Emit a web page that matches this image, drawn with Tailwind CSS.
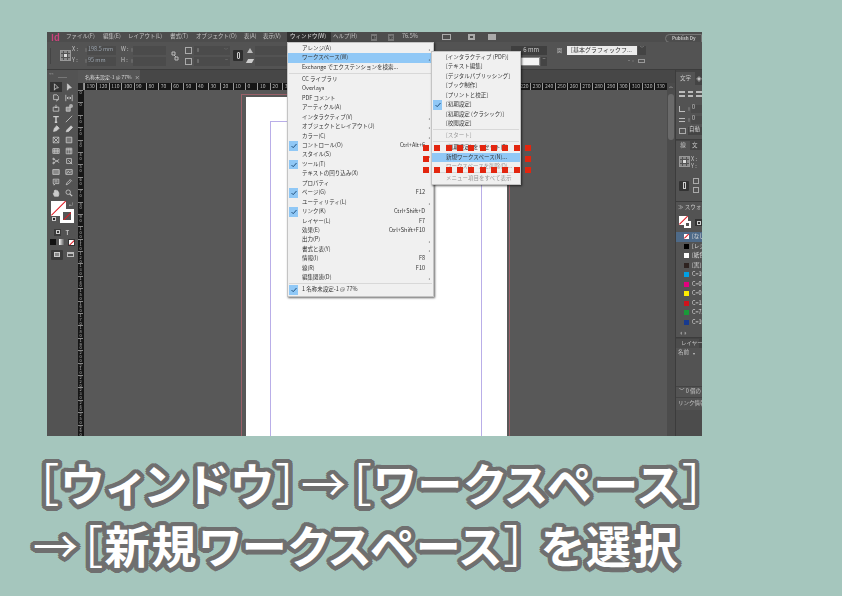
<!DOCTYPE html>
<html lang="ja">
<head>
  <meta charset="UTF-8">
  <title>新規ワークスペース</title>
  <script src="https://cdn.jsdelivr.net/npm/@tailwindcss/browser@4"></script>
</head>
<body class="bg-[#a5c6bd] w-[842px] h-[596px] overflow-hidden font-['Noto_Sans_CJK_JP',sans-serif]">
  <div class="pt-[32px] pl-[47px]">
    <!-- app window -->
    <div class="relative w-[655px] h-[404px] bg-[#535353] flex flex-col overflow-hidden text-[5.5px] text-[#c4c4c4] [filter:blur(0.35px)]">

      <!-- menu bar -->
      <div class="h-[10px] bg-[#4d4d4d] flex items-center pl-[4px] shrink-0 leading-none whitespace-nowrap">
        <span class="w-[15px] text-[9px] font-bold text-[#c9437c]">Id</span>
        <span class="w-[37px]">ファイル(F)</span>
        <span class="w-[25px]">編集(E)</span>
        <span class="w-[42px]">レイアウト(L)</span>
        <span class="w-[26px]">書式(T)</span>
        <span class="w-[48px]">オブジェクト(O)</span>
        <span class="w-[19px]">表(A)</span>
        <span class="w-[24px]">表示(V)</span>
        <span class="w-[44px] h-[10px] bg-[#303030] pl-[3px] flex items-center text-[#e0e0e0]">ウィンドウ(W)</span>
        <span class="w-[40px] pl-[2px]">ヘルプ(H)</span>
        <span class="w-[6px] h-[7px] bg-[#777] text-[#333] text-[4px] flex items-center justify-center font-bold">Br</span>
        <span class="w-[6px] h-[7px] bg-[#777] text-[#333] text-[4px] flex items-center justify-center font-bold ml-[11px]">St</span>
        <span class="ml-[8px] w-[35px]">76.5%</span>
        <span class="w-[9px] h-[6px] border border-[#aaa] ml-[5px]"></span>
        <span class="w-[7px] h-[6px] border-2 border-[#aaa] ml-[17px]"></span>
        <span class="w-[8px] h-[6px] bg-[#aaa] ml-[13px]"></span>
        <span class="ml-auto mr-0 mt-[2px] w-[37px] h-[9px] border border-[#777] rounded-l-[5px] text-[4.5px] font-bold flex items-center pl-[6px]">Publish Dy</span>
      </div>

      <!-- control panel -->
      <div class="h-[28px] bg-[#535353] border-b border-[#3c3c3c] flex items-center shrink-0 leading-none whitespace-nowrap">
        <div class="w-[1px] h-[16px] bg-[#444] ml-[3px]"></div>
        <div class="ml-[9px] w-[11px] h-[11px] grid grid-cols-3 gap-[1px] border border-[#999]">
          <i class="bg-[#888]"></i><i class="bg-[#888]"></i><i class="bg-[#888]"></i><i class="bg-[#888]"></i><i class="bg-[#ddd]"></i><i class="bg-[#888]"></i><i class="bg-[#888]"></i><i class="bg-[#888]"></i><i class="bg-[#888]"></i>
        </div>
        <div class="ml-[1px] flex flex-col gap-[2px] w-[44px]">
          <div class="h-[9px] flex items-center"><span class="w-[12px]">X :</span><span class="w-[3px] text-[4px] text-[#888]">◊</span><span class="h-[9px] flex-1 bg-[#4b4b4b] pl-[1px] flex items-center text-[#9aa3ad]">198.5 mm</span></div>
          <div class="h-[9px] flex items-center"><span class="w-[12px]">Y :</span><span class="w-[3px] text-[4px] text-[#888]">◊</span><span class="h-[9px] flex-1 bg-[#4b4b4b] pl-[1px] flex items-center text-[#9aa3ad]">95 mm</span></div>
        </div>
        <div class="ml-[5px] flex flex-col gap-[2px] w-[45px]">
          <div class="h-[9px] flex items-center"><span class="w-[9px]">W :</span><span class="w-[3px] text-[4px] text-[#888]">◊</span><span class="h-[9px] flex-1 bg-[#4b4b4b]"></span></div>
          <div class="h-[9px] flex items-center"><span class="w-[9px]">H :</span><span class="w-[3px] text-[4px] text-[#888]">◊</span><span class="h-[9px] flex-1 bg-[#4b4b4b]"></span></div>
        </div>
        <svg class="ml-[5px] w-[8px] h-[10px]" viewBox="0 0 8 10" fill="none" stroke="#bbb"><path d="M1 1h3v3H1zM3 4l2 2M4 6h3v3H4z"/></svg>
        <div class="ml-[6px] flex flex-col gap-[2px] w-[45px]">
          <div class="h-[9px] flex items-center gap-[2px]"><span class="w-[7px] h-[7px] border border-[#aaa]"></span><span class="h-[9px] flex-1 bg-[#4b4b4b] flex items-center justify-between px-[2px] text-[#888]"><b class="text-[4px]">◊</b><b class="font-normal text-[4px]">﹀</b></span></div>
          <div class="h-[9px] flex items-center gap-[2px]"><span class="w-[7px] h-[7px] border border-[#aaa]"></span><span class="h-[9px] flex-1 bg-[#4b4b4b] flex items-center justify-between px-[2px] text-[#888]"><b class="text-[4px]">◊</b><b class="font-normal">−</b></span></div>
        </div>
        <div class="ml-[3px] w-[10px] h-[11px] bg-[#2e2e2e] rounded-[1px] flex items-center justify-center">
          <span class="w-[3px] h-[7px] border border-[#ccc] rounded-[1px]"></span>
        </div>
        <div class="ml-[4px] flex flex-col gap-[2px] w-[42px]">
          <div class="h-[9px] flex items-center gap-[2px]"><span class="w-0 h-0 border-x-[3px] border-x-transparent border-b-[5px] border-b-[#bbb]"></span><span class="h-[9px] flex-1 bg-[#4b4b4b]"></span></div>
          <div class="h-[9px] flex items-center gap-[2px]"><span class="w-[6px] h-[4px] bg-[#ccc] skew-x-[-30deg]"></span><span class="h-[9px] flex-1 bg-[#4b4b4b]"></span></div>
        </div>
        <div class="flex-1"></div>
        <!-- right of the open menus -->
        <div class="flex flex-col gap-[2px] w-[36px]">
          <div class="h-[9px] bg-[#3f3f3f] text-[#ccc] flex items-center justify-end pr-[8px] text-[6px]">6 mm</div>
          <div class="h-[9px] flex items-center gap-[1px]"><span class="w-[28px] h-[9px] bg-[#f4f4f4] border border-[#888] ml-[1px]"></span><span class="flex-1 h-[9px] bg-[#444] text-center">−</span></div>
        </div>
        <div class="ml-[10px] w-[10px] h-[19px] text-[5px] leading-[8px]">圖</div>
        <div class="flex flex-col gap-[2px] w-[79px]">
          <div class="h-[9px] flex items-center gap-[1px]"><span class="w-[70px] h-[9px] bg-[#ececec] text-[#333] text-[6px] pl-[4px] flex items-center">[基本グラフィックフ...</span><span class="flex-1 h-[9px] bg-[#444] text-center text-[4px]">﹀</span></div>
          <div class="h-[9px] flex items-center justify-end pr-[1px] gap-[3px] text-[4px] text-[#999]"><span>▪◦</span><span class="w-[7px] h-[4px] border border-[#999]"></span></div>
        </div>
        <div class="w-[56px]"></div>
      </div>

      <div class="flex-1 flex min-h-0">
        <!-- toolbox -->
        <div id="toolbox" class="w-[31px] shrink-0 bg-[#535353] flex flex-col items-center">
          <div class="w-full text-[4px] leading-[6px] pl-[2px] text-[#aaa]">&lt;&lt;</div>
          <div class="w-[9px] h-[1px] bg-[#777] mt-[1px] mb-[4px]"></div>
          <div id="tools" class="flex flex-col gap-[0.6px]"></div>
          <!-- fill and stroke -->
          <div class="relative w-[26px] h-[24px] mt-[3px] ml-[2px]">
            <div class="w-[15px] h-[15px] bg-white overflow-hidden"><div class="w-[22px] h-[1px] bg-[#e01b24] origin-top-left rotate-[-45deg] translate-y-[14px]"></div></div>
            <div class="absolute left-[9px] top-[8px] w-[14px] h-[14px] border-[3px] border-white bg-[#555] overflow-hidden"><div class="w-[20px] h-[1px] bg-[#e01b24] origin-top-left rotate-[-45deg] translate-y-[8px]"></div></div>
            <span class="absolute left-[18px] top-0 text-[5px] leading-[6px]">⤾</span>
            <span class="absolute left-[1px] top-[16px] w-[4px] h-[4px] bg-[#222] border border-[#ccc]"></span>
          </div>
          <div class="flex gap-[3px] mt-[4px]">
            <span class="w-[7px] h-[7px] flex items-center justify-center bg-[#3a3a3a]"><i class="w-[4px] h-[4px] border border-[#ccc]"></i></span>
            <span class="w-[7px] h-[7px] text-center text-[6px] leading-[7px] font-bold">T</span>
          </div>
          <div class="flex gap-[3px] mt-[3px] items-center">
            <span class="w-[6px] h-[6px] bg-[#111]"></span>
            <span class="w-[6px] h-[6px] bg-gradient-to-r from-white to-[#444]"></span>
            <span class="w-[7px] h-[7px] bg-white border border-[#333] overflow-hidden"><i class="block w-[9px] h-[1px] bg-[#e01b24] origin-top-left rotate-[-45deg] translate-y-[5px]"></i></span>
          </div>
          <div class="flex gap-[3px] mt-[4px] items-center">
            <span class="w-[12px] h-[10px] bg-[#3a3a3a] rounded-[1px] flex items-center justify-center"><i class="w-[6px] h-[5px] border border-[#ccc] bg-[#888]"></i></span>
            <span class="w-[7px] h-[5px] border border-[#bbb] border-t-2 ml-[1px]"></span>
          </div>
        </div>

        <!-- document area -->
        <div class="flex-1 flex flex-col min-w-0">
          <div class="h-[13px] bg-[#474747] flex items-end shrink-0">
            <div class="w-[62px] h-[13px] bg-[#565656] flex items-center pl-[7px] text-[5px] leading-none text-[#ddd] whitespace-nowrap">名称未設定-1 @ 77% <span class="ml-[3px]">×</span></div>
          </div>
          <div class="h-[7px] flex bg-[#161616] shrink-0 overflow-hidden">
            <div class="w-[6px] shrink-0 bg-[#222] border-r border-[#888]"></div>
            <div id="hruler" class="flex flex-1 text-[5px] leading-[6px] text-[#bbb]"></div>
            <div class="w-[8px] shrink-0 bg-[#4a4a4a] text-center text-[4px] leading-[7px]">︿</div>
          </div>
          <div class="flex-1 flex min-h-0">
            <div id="vruler" class="w-[6px] shrink-0 bg-[#161616] overflow-hidden text-[4px] leading-[3.800px] text-[#bbb]"></div>
            <!-- canvas -->
            <div class="flex-1 bg-[#585858] overflow-hidden">
              <div class="ml-[157px] mt-[4px] w-[269px] h-[400px] border border-[#9a6068] pl-[4px] pr-[2px] pt-[2px]">
                <div class="h-full bg-white pl-[24px] pr-[25px] pt-[24px]">
                  <div class="h-full border border-[#b9aee8]"></div>
                </div>
              </div>
            </div>
            <div class="w-[8px] shrink-0 bg-[#4c4c4c] pt-[4px] flex justify-center">
              <div class="w-[6px] h-[46px] bg-[#6a6a6a] rounded-[3px]"></div>
            </div>
          </div>
        </div>

        <!-- right panels -->
        <div class="w-[27px] shrink-0 bg-[#535353] border-l border-[#3c3c3c] flex flex-col overflow-hidden whitespace-nowrap leading-none">
          <div class="h-[15px] bg-[#444] flex items-end shrink-0">
            <span class="w-[22px] h-[13px] bg-[#535353] flex items-center justify-center text-[5.5px]">文字</span>
            <span class="pl-[1px] pb-[3px]">◈</span>
          </div>
          <div class="h-[55px] shrink-0 border-b border-[#3c3c3c] pt-[6px] pl-[3px]">
            <div class="flex gap-[3px] h-[7px]">
              <span class="w-[7px] h-[6px] border-y-2 border-[#bbb]"></span>
              <span class="w-[7px] h-[6px] border-y-2 border-[#bbb]"></span>
              <span class="w-[7px] h-[6px] border-y-2 border-[#bbb]"></span>
            </div>
            <div class="flex items-center h-[10px] mt-[6px]"><span class="w-[6px] h-[6px] border-l border-[#bbb] border-b"></span><span class="ml-[2px] w-[4px] text-[4px] text-[#999]">◊</span><span class="flex-1 h-[8px] bg-[#4a4a4a] pl-[1px]">0</span></div>
            <div class="flex items-center h-[10px] mt-[1px]"><span class="w-[6px] h-[4px] border-y border-[#bbb]"></span><span class="ml-[2px] w-[4px] text-[4px] text-[#999]">◊</span><span class="flex-1 h-[8px] bg-[#4a4a4a] pl-[1px]">0</span></div>
            <div class="flex items-center h-[10px] mt-[1px]"><span class="w-[7px] h-[6px] border border-[#aaa]"></span><span class="ml-[2px] flex-1 h-[8px] bg-[#444] pl-[1px] text-[#ddd]">自動</span></div>
          </div>
          <div class="h-[10px] bg-[#444] flex items-end shrink-0">
            <span class="w-[14px] h-[9px] bg-[#535353] flex items-center justify-center">線</span>
            <span class="pl-[2px] pb-[2px]">文</span>
          </div>
          <div class="h-[52px] shrink-0 border-b border-[#3c3c3c] pl-[3px] pt-[6px]">
            <div class="flex">
              <div class="w-[11px] h-[11px] grid grid-cols-3 gap-[1px] border border-[#999]">
                <i class="bg-[#888]"></i><i class="bg-[#888]"></i><i class="bg-[#888]"></i><i class="bg-[#888]"></i><i class="bg-[#ddd]"></i><i class="bg-[#888]"></i><i class="bg-[#888]"></i><i class="bg-[#888]"></i><i class="bg-[#888]"></i>
              </div>
              <div class="ml-[1px] leading-[7px]">X :<br>Y :</div>
            </div>
            <div class="flex items-center mt-[8px]">
              <span class="w-[10px] h-[10px] bg-[#333] rounded-[1px] flex items-center justify-center"><i class="w-[3px] h-[7px] border border-[#ccc]"></i></span>
              <span class="ml-[4px] flex flex-col gap-[3px]"><i class="w-[6px] h-[6px] border border-[#aaa]"></i><i class="w-[6px] h-[6px] border border-[#aaa]"></i></span>
            </div>
          </div>
          <div class="h-[11px] shrink-0 flex items-center pl-[2px] text-[5.5px]">≫ スウォッチ</div>
          <div class="h-[19px] shrink-0 flex items-center pl-[3px] gap-[3px]">
            <div class="relative w-[13px] h-[13px]">
              <span class="block w-[9px] h-[9px] bg-white overflow-hidden"><i class="block w-[13px] h-[1px] bg-[#e01b24] origin-top-left rotate-[-45deg] translate-y-[8px]"></i></span>
              <span class="absolute left-[5px] top-[5px] w-[7px] h-[7px] border-2 border-white bg-[#555]"></span>
            </div>
            <span class="w-[7px] h-[7px] bg-[#333] flex items-center justify-center"><i class="w-[4px] h-[4px] border border-[#ccc]"></i></span>
          </div>
          <div id="swatches" class="shrink-0 text-[5.5px]"></div>
          <div class="h-[11px] shrink-0 border-b border-[#3c3c3c] flex items-center pl-[3px] text-[7px] text-[#999]">◖◗</div>
          <div class="h-[10px] bg-[#444] flex items-end shrink-0"><span class="w-[23px] h-[9px] bg-[#4c4c4c] flex items-center pl-[5px]">レイヤー</span></div>
          <div class="h-[10px] shrink-0 flex items-center pl-[2px] text-[5.5px]">名前<span class="ml-[4px] text-[4px]">▾</span></div>
          <div class="h-[29px] shrink-0 border-b border-[#444]"></div>
          <div class="h-[10px] shrink-0 flex items-center pl-[3px] text-[5.5px]">﹀ 0 個のリンク</div>
          <div class="h-[13px] shrink-0 flex items-center pl-[2px] text-[5.5px] border-t border-[#444]">リンク情報</div>
          <div class="flex-1 bg-[#4c4c4c]"></div>
        </div>
      </div>

      <!-- ウィンドウ menu -->
      <div id="main-menu" class="absolute left-[240px] top-[10px] w-[147px] h-[255px] bg-[#f0f0f0] border border-[#c4c4c4] shadow-[1px_1px_2px_rgba(0,0,0,0.6)] pt-[1px] text-[#333] leading-none whitespace-nowrap"></div>
      <!-- ワークスペース submenu -->
      <div id="sub-menu" class="absolute left-[384px] top-[19px] w-[90px] h-[134px] bg-[#f0f0f0] border border-[#c4c4c4] shadow-[1px_1px_2px_rgba(0,0,0,0.6)] pt-[1px] text-[#333] leading-none whitespace-nowrap"></div>
      <!-- red dashed marker -->
      <div class="absolute left-[376px] top-[113px] w-[108px] h-[28px] flex flex-col justify-between">
        <div class="flex justify-between"><i class="w-[6px] h-[6px] bg-[#e3260f]"></i><i class="w-[6px] h-[6px] bg-[#e3260f]"></i><i class="w-[6px] h-[6px] bg-[#e3260f]"></i><i class="w-[6px] h-[6px] bg-[#e3260f]"></i><i class="w-[6px] h-[6px] bg-[#e3260f]"></i><i class="w-[6px] h-[6px] bg-[#e3260f]"></i><i class="w-[6px] h-[6px] bg-[#e3260f]"></i><i class="w-[6px] h-[6px] bg-[#e3260f]"></i><i class="w-[6px] h-[6px] bg-[#e3260f]"></i><i class="w-[6px] h-[6px] bg-[#e3260f]"></i></div>
        <div class="flex justify-between"><i class="w-[6px] h-[6px] bg-[#e3260f]"></i><i class="w-[6px] h-[6px] bg-[#e3260f]"></i></div>
        <div class="flex justify-between"><i class="w-[6px] h-[6px] bg-[#e3260f]"></i><i class="w-[6px] h-[6px] bg-[#e3260f]"></i><i class="w-[6px] h-[6px] bg-[#e3260f]"></i><i class="w-[6px] h-[6px] bg-[#e3260f]"></i><i class="w-[6px] h-[6px] bg-[#e3260f]"></i><i class="w-[6px] h-[6px] bg-[#e3260f]"></i><i class="w-[6px] h-[6px] bg-[#e3260f]"></i><i class="w-[6px] h-[6px] bg-[#e3260f]"></i><i class="w-[6px] h-[6px] bg-[#e3260f]"></i><i class="w-[6px] h-[6px] bg-[#e3260f]"></i></div>
      </div>
    </div>
  </div>

  <!-- caption: round outline = stroke plus rings of hard shadows -->
  <div class="pt-[16px] pl-[36px] text-[45px] leading-[62px] font-bold text-white whitespace-nowrap tracking-[2.5px] [font-feature-settings:'palt'] [-webkit-text-stroke:5px_#6f6f6f] [paint-order:stroke_fill] [text-shadow:4.5px_0_#6f6f6f,4.16px_1.72px_#6f6f6f,3.18px_3.18px_#6f6f6f,1.72px_4.16px_#6f6f6f,0_4.5px_#6f6f6f,-1.72px_4.16px_#6f6f6f,-3.18px_3.18px_#6f6f6f,-4.16px_1.72px_#6f6f6f,-4.5px_0_#6f6f6f,-4.16px_-1.72px_#6f6f6f,-3.18px_-3.18px_#6f6f6f,-1.72px_-4.16px_#6f6f6f,0_-4.5px_#6f6f6f,1.72px_-4.16px_#6f6f6f,3.18px_-3.18px_#6f6f6f,4.16px_-1.72px_#6f6f6f,3px_0_#6f6f6f,2.12px_2.12px_#6f6f6f,0_3px_#6f6f6f,-2.12px_2.12px_#6f6f6f,-3px_0_#6f6f6f,-2.12px_-2.12px_#6f6f6f,0_-3px_#6f6f6f,2.12px_-2.12px_#6f6f6f]">
    <div><span class="font-normal">［</span>ウィンドウ<span class="font-normal">］→［</span>ワークスペース<span class="font-normal">］</span></div>
    <div class="-ml-[3px] tracking-[2px]"><span class="font-normal">→［</span>新規ワークスペース<span class="font-normal">］</span> を選択</div>
  </div>

  <script>
    // S = separator
    const mainMenu = [
      ['アレンジ(A)', '', 1], ['ワークスペース(W)', '', 1, 0, 1], ['Exchange でエクステンションを検索...'], 'S',
      ['CC ライブラリ'], ['Overlays'], ['PDF コメント'], ['アーティクル(A)'], ['インタラクティブ(V)', '', 1],
      ['オブジェクトとレイアウト(J)', '', 1], ['カラー(C)', '', 1], ['コントロール(O)', 'Ctrl+Alt+6', 0, 1], ['スタイル(S)', '', 1],
      ['ツール(T)', '', 0, 1], ['テキストの回り込み(X)'], ['プロパティ'], ['ページ(G)', 'F12', 0, 1], ['ユーティリティ(L)', '', 1],
      ['リンク(K)', 'Ctrl+Shift+D', 0, 1], ['レイヤー(L)', 'F7'], ['効果(E)', 'Ctrl+Shift+F10'], ['出力(P)', '', 1], ['書式と表(Y)', '', 1],
      ['情報(I)', 'F8'], ['線(R)', 'F10'], ['編集関連(D)', '', 1], 'S',
      ['1 名称未設定-1 @ 77%', '', 0, 1]
    ];
    const subMenu = [
      ['[インタラクティブ (PDF)]'], ['[テキスト編集]'], ['[デジタルパブリッシング]'], ['[ブック制作]'], ['[プリントと校正]'],
      ['[初期設定]', '', 0, 1], ['[初期設定 (クラシック)]'], ['[校閲設定]'], 'S',
      ['[スタート]', '', 0, 0, 0, 1], 'S',
      ['[初期設定] をリセット(R)'], ['新規ワークスペース(N)...', '', 0, 0, 1], ['ワークスペースを削除(D)...', '', 0, 0, 0, 1], 'S',
      ['メニュー項目をすべて表示', '', 0, 0, 0, 1]
    ];
    function menuRow(item, labelClass) {
      if (item === 'S') return '<div class="h-[2.7px] flex items-center pl-[1px] pr-[1px]"><div class="w-full h-[1px] bg-[#d8d8d8]"></div></div>';
      const [label, key, arrow, checked, active, off] = item;
      return `
        <div class="h-[9.45px] flex items-center ${active ? 'bg-[#90c8f6]' : ''} ${off ? 'text-[#999]' : ''}">
          <span class="w-[9px] h-[9.45px] ml-[1px] shrink-0 flex items-center justify-center ${checked ? 'bg-[#90c8f6]' : ''}">
            ${checked ? '<svg class="w-[6px] h-[6px]" viewBox="0 0 6 6" fill="none" stroke="#24527e" stroke-width="1"><path d="M.5 3l1.7 1.7L5.5 1"/></svg>' : ''}
          </span>
          <span class="${labelClass}">${label}</span>
          <span class="ml-auto mr-[8px]">${key || ''}</span>
          ${arrow ? '<span class="mr-[3px] text-[5px]">›</span>' : ''}
        </div>`;
    }
    document.getElementById('main-menu').innerHTML = mainMenu.map(i => menuRow(i, 'pl-[4px]')).join('');
    document.getElementById('sub-menu').innerHTML = subMenu.map(i => menuRow(i, 'pl-[4px]')).join('');

    const nums = [];
    for (let n = 130; n > 0; n -= 10) nums.push(n);
    for (let n = 0; n <= 330; n += 10) nums.push(n);
    document.getElementById('hruler').innerHTML = nums.map(n => `<span class="w-[12.4px] shrink-0 h-[7px] pl-[1.5px] border-l border-[#999]">${n}</span>`).join('');
    const vnums = [0, 0, 10, 20, 30, 40, 50, 60, 70, 80, 90, 100, 110, 120, 130, 140, 150, 160, 170, 180, 190, 200, 210, 220, 230, 240, 250, 260, 270, 280, 290, 300];
    document.getElementById('vruler').innerHTML = vnums.map(n => `<div class="h-[12.4px] pl-[1.5px] w-[5px] break-all border-t border-[#888]">${n}</div>`).join('');

    const swatches = [
      ['[なし]', 'bg-white', 1], ['[レジストレーション]', 'bg-black'], ['[紙色]', 'bg-white'], ['[黒]', 'bg-[#2e2320]'],
      ['C=100 M=0', 'bg-[#009fe3]'], ['C=0 M=100', 'bg-[#e4007f]'], ['C=0 M=0', 'bg-[#ffed00]'], ['C=15 M=100', 'bg-[#d0121b]'],
      ['C=75 M=5', 'bg-[#1a9a38]'], ['C=100 M=90', 'bg-[#173a8f]']
    ];
    document.getElementById('swatches').innerHTML = swatches.map(([name, color, selected]) => `
      <div class="h-[9.5px] flex items-center pl-[8px] gap-[3px] ${selected ? 'bg-[#4e6a88]' : ''}">
        <span class="w-[5px] h-[5px] shrink-0 overflow-hidden ${color}">${selected ? '<i class="block w-[8px] h-[1px] bg-[#e01b24] origin-top-left rotate-[-45deg] translate-y-[4px]"></i>' : ''}</span><span class="text-[#ddd]">${name}</span>
      </div>`).join('');

    const icons = {
      arrow: '<path d="M3 1l5 5-3 .3L3 9z"/>',
      arrowFill: '<path d="M3 1l5 5-3 .3L3 9z" fill="#ccc"/>',
      page: '<path d="M2 1h4l2 2v4H2zM5 9l3-2"/>',
      gap: '<path d="M1 1v8M9 1v8M2.5 5h5M2.5 5l1.500-1.500M2.500 5l1.500 1.500M7.500 5l-1.500-1.500M7.500 5l-1.500 1.500"/>',
      collect: '<path d="M1.500 4h7v5h-7zM5 1v4M3.500 3.500L5 5l1.500-1.500"/>',
      place: '<path d="M1.500 4h5v5h-5zM6 1h3v3H6z" fill="#999"/>',
      type: '<path d="M1.500 2h7M5 2v7M3.500 9h3" stroke-width="1.800"/>',
      line: '<path d="M1 9l8-8"/>',
      pen: '<path d="M2 8l1-4 3-3 3 3-3 3z" fill="#ccc"/>',
      pencil: '<path d="M1.500 8.500l1-2.500 5-5 2 2-5 5z" fill="#ccc"/>',
      frame: '<path d="M1.500 1.500h7v7h-7zM1.500 1.500l7 7M8.500 1.500l-7 7"/>',
      rect: '<path d="M1.500 1.500h7v7h-7z" fill="#777"/>',
      table: '<path d="M1 2h8v6H1zM1 4h8M1 6h8M3.500 2v6M6.500 2v6"/>',
      table2: '<path d="M1.500 1.500h7v7h-7zM4 1.500v7M6.500 1.500v7M1.500 3.500h7" />',
      scissors: '<path d="M1 2l8 5M1 8l8-5"/><circle cx="2" cy="2.500" r="1"/><circle cx="2" cy="7.500" r="1"/>',
      transform: '<path d="M2 2h6v6H2zM4 4l5 5"/>',
      gradient: '<path d="M1 2h8v6H1z" fill="#888"/>',
      feather: '<path d="M1 2h8v6H1z" fill="#666"/><path d="M2 7l2-3 2 2 2-2"/>',
      note: '<path d="M1.500 1.500h7v5.500H4L2.500 9V7h-1zM3 3.500h4M3 5h4"/>',
      dropper: '<path d="M1.500 8.500l1-2.500 3-3 1.500 1.500-3 3zM6 1.500l2.500 2.500"/>',
      hand: '<path d="M3 9L1.500 5.500l1-.5L3 4V2h1v1.500V1.500h1.500V3l1-.8 1 .3V4l1 .5V7L8 9z" fill="#ccc"/>',
      zoom: '<circle cx="4" cy="4" r="2.800"/><path d="M6 6l3 3" stroke-width="1.500"/>'
    };
    const toolRows = [
      ['arrow', 'arrowFill'], ['page', 'gap'], ['collect', 'place'], ['type', 'line'], ['pen', 'pencil'], ['frame', 'rect'],
      ['table', 'table2'], ['scissors', 'transform'], ['gradient', 'feather'], ['note', 'dropper'], ['hand', 'zoom']
    ];
    document.getElementById('tools').innerHTML = toolRows.map((row, r) => `
      <div class="flex h-[10px] gap-[1px]">
        ${row.map((name, c) => `<span class="w-[12px] h-[10px] flex items-center justify-center ${r === 0 && c === 0 ? 'bg-[#333]' : ''}"><svg class="w-[8px] h-[8px]" viewBox="0 0 10 10" fill="none" stroke="#ccc" stroke-width="1">${icons[name]}</svg></span>`).join('')}
      </div>`).join('');
  </script>
</body>
</html>
